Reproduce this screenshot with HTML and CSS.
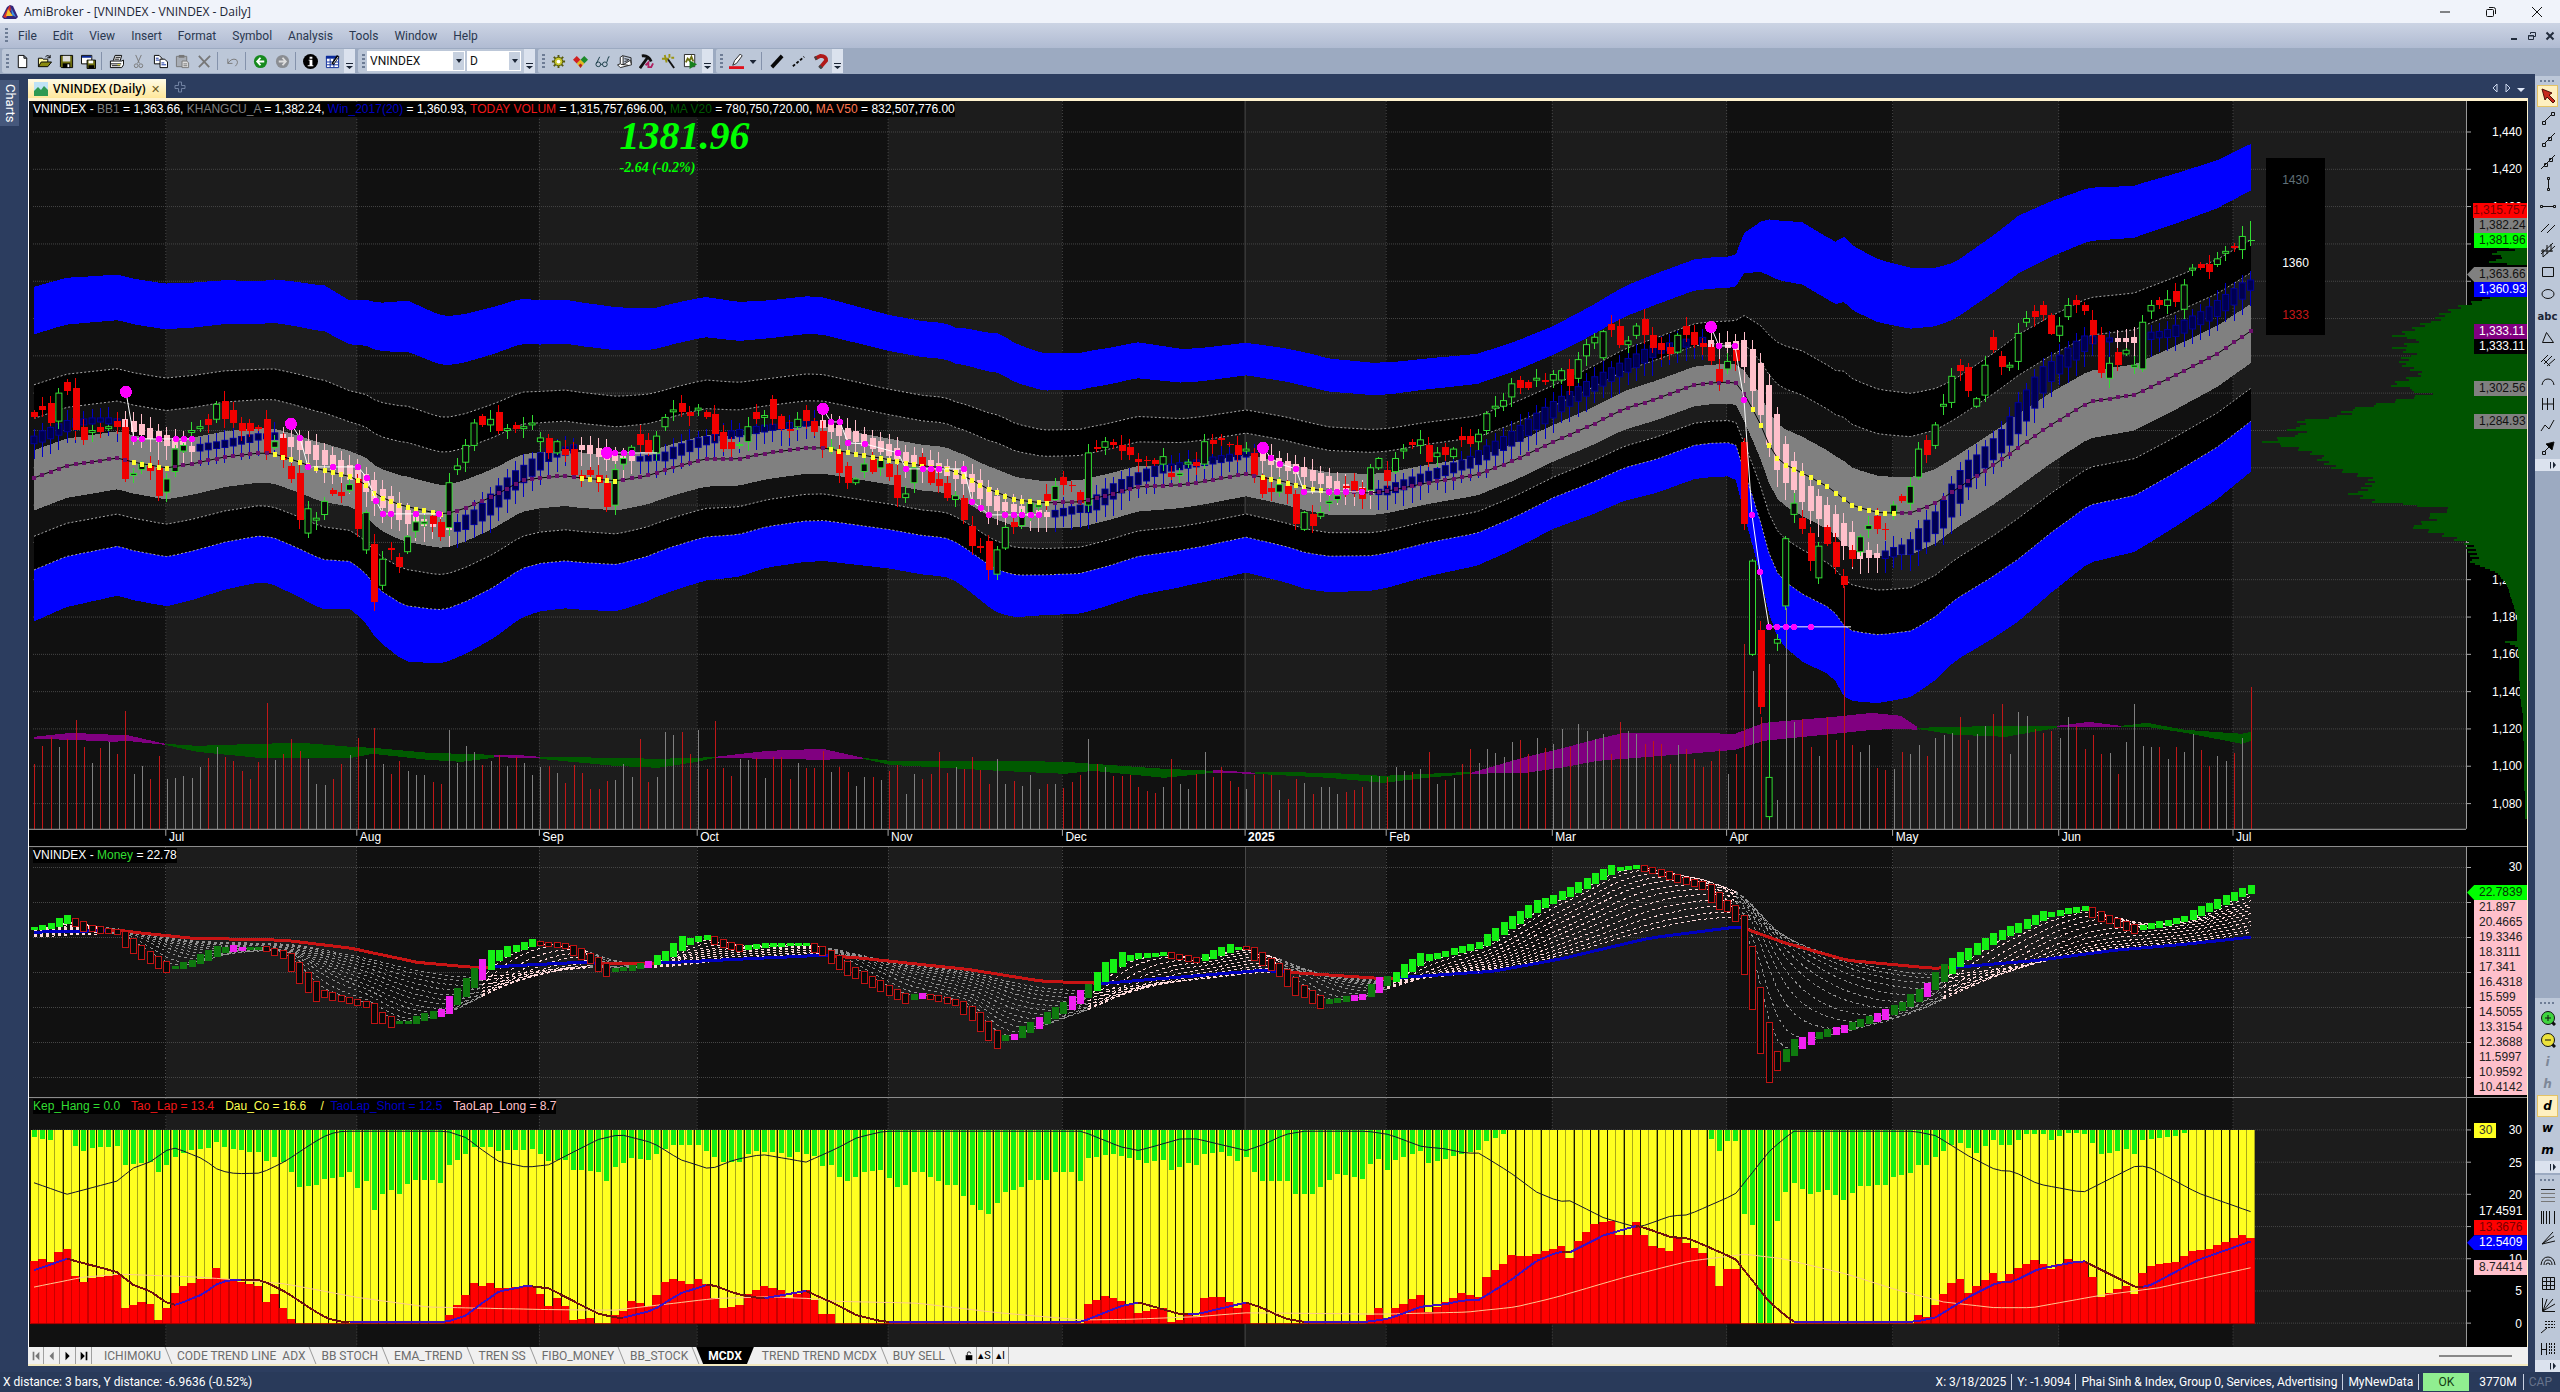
FILE: index.html
```
<!DOCTYPE html>
<html lang="en">
<head>
  <meta charset="UTF-8">
  <meta name="viewport" content="width=device-width, initial-scale=1.0">
  <title>AmiBroker - [VNINDEX - VNINDEX - Daily]</title>
  <link rel="stylesheet" href="styles.css">
</head>
<body>
  <header class="titlebar">
    <svg class="logo" viewBox="0 0 16 16"><path d="M8 1l3 1 5 11-2 2H2l-2-2L5 3z" fill="#33267c"/><path d="M8 1L1 13l3 1 5-8z" fill="#d8322c"/><path d="M6 5l5 7H4z" fill="#f4c22c"/><path d="M9 4l5 9-4-2z" fill="#3d8ee0"/></svg>
    <h1>AmiBroker - [VNINDEX - VNINDEX - Daily]</h1>
    <div class="wincontrols">
      <button aria-label="Minimize"><svg viewBox="0 0 12 12"><path d="M1 6h10"/></svg></button>
      <button aria-label="Restore"><svg viewBox="0 0 12 12"><rect x="1.5" y="3.5" width="7" height="7" rx="1"/><path d="M4 1.500h4.500q2 0 2 2V8"/></svg></button>
      <button aria-label="Close"><svg viewBox="0 0 12 12"><path d="M1 1l10 10M11 1L1 11"/></svg></button>
    </div>
  </header>

  <nav class="menubar">
    <span class="grip"></span>
    <button>File</button><button>Edit</button><button>View</button><button>Insert</button><button>Format</button><button>Symbol</button><button>Analysis</button><button>Tools</button><button>Window</button><button>Help</button>
    <div class="mdi">
      <button aria-label="Minimize chart"><svg viewBox="0 0 10 10"><path d="M2 8h6" stroke-width="2"/></svg></button>
      <button aria-label="Restore chart"><svg viewBox="0 0 10 10"><path d="M3.500 3V1.500h5v4H7M1.500 4.500h5v4h-5zM1 5h6" /></svg></button>
      <button aria-label="Close chart"><svg viewBox="0 0 10 10"><path d="M1.500 1.500l7 7M8.500 1.500l-7 7" stroke-width="2"/></svg></button>
    </div>
  </nav>

  <div class="toolbars">
    <div class="toolbar">
      <span class="grip"></span>
      <button aria-label="New"><svg viewBox="0 0 16 16"><path d="M3.500 1.500h6l3 3v10h-9zM9.500 1.500v3h3" fill="#fff" stroke="#000"/></svg></button>
      <button aria-label="Open"><svg viewBox="0 0 16 16"><path d="M1.500 13.500v-9h4l1 1h5v3" fill="#fff8a0" stroke="#000"/><path d="M1.500 13.500l3-5h11l-4 5z" fill="#8a8a10" stroke="#000"/><path d="M9 3q3-3 5 1M14 1v3h-3" fill="none" stroke="#000"/></svg></button>
      <button aria-label="Save"><svg viewBox="0 0 16 16"><path d="M1.500 1.500h13v13h-12l-1-1z" fill="#6d6d10" stroke="#000"/><path d="M4 2h8v6H4z" fill="#ddd"/><path d="M4 10h8v5H4z" fill="#000"/><path d="M9 11h2v3H9z" fill="#fff"/></svg></button>
      <button aria-label="Save as"><svg viewBox="0 0 16 16"><path d="M.5 1.500h11v9H.5z" fill="#fff" stroke="#000"/><path d="M1 2h10v2H1z" fill="#0a2a9a"/><path d="M6.500 6.500h9v9h-9z" fill="#6d6d10" stroke="#000"/><path d="M8 7h5v3H8z" fill="#fff"/><path d="M8 12h6v3H8z" fill="#000"/></svg></button>
      <i class="sep"></i>
      <button aria-label="Print"><svg viewBox="0 0 16 16"><path d="M4.500 7l2-5.500h7L12 7M1.500 7.500h12l2-1v5l-2 3h-12z" fill="#fff" stroke="#000"/><path d="M7 3.500h5M6 5.500h5M2 10.500h11M3 12.500h9" stroke="#000"/><path d="M9 11h3v1H9z" fill="#e8e020"/></svg></button>
      <button aria-label="Cut"><svg viewBox="0 0 16 16"><path d="M5 1l4 9M11 1L7 10" fill="none" stroke="#777"/><circle cx="5.500" cy="12.500" r="2" fill="none" stroke="#777"/><circle cx="10.500" cy="12.500" r="2" fill="none" stroke="#777"/></svg></button>
      <button aria-label="Copy"><svg viewBox="0 0 16 16"><path d="M1.500 1.500h5l3 3v6h-8z" fill="#fff" stroke="#000"/><path d="M7.500 5.500h5l3 3v6h-8z" fill="#fff" stroke="#000"/><path d="M3 4.500h3M3 6.500h4M9 9.500h3M9 11.500h5" stroke="#0a2a9a"/></svg></button>
      <button aria-label="Paste"><svg viewBox="0 0 16 16"><path d="M1.500 2.500h11v11h-11z" fill="#a8adb5" stroke="#777"/><path d="M4 1h6v3H4z" fill="#777"/><path d="M7.500 7.500h5l2 2v5h-7z" fill="#ddd" stroke="#777"/><path d="M9 10.500h4M9 12.500h4" stroke="#777"/></svg></button>
      <button aria-label="Delete"><svg viewBox="0 0 16 16"><path d="M2 2l11 12M14 2L2 14" fill="none" stroke="#777" stroke-width="2"/></svg></button>
      <i class="sep"></i>
      <button aria-label="Undo"><svg viewBox="0 0 16 16"><path d="M3 5v5h5M3 10q4-6 9-4 3 3-1 7" fill="none" stroke="#777"/></svg></button>
      <i class="sep"></i>
      <button aria-label="Back"><svg viewBox="0 0 16 16"><circle cx="8" cy="8" r="7" fill="#168a1e"/><path d="M12 8H5M8 4L4.500 8 8 12" fill="none" stroke="#fff" stroke-width="2"/></svg></button>
      <button aria-label="Forward"><svg viewBox="0 0 16 16"><circle cx="8" cy="8" r="7" fill="#8a8d92"/><path d="M4 8h7M8 4l3.500 4L8 12" fill="none" stroke="#ddd" stroke-width="2"/></svg></button>
      <i class="sep"></i>
      <button aria-label="Info"><svg viewBox="0 0 16 16"><circle cx="8" cy="8" r="8" fill="#000"/><path d="M7 3h3v2H7zM6 6h4v6h1v1H5v-1h2V7H6z" fill="#fff"/></svg></button>
      <button aria-label="Properties"><svg viewBox="0 0 16 16"><path d="M1.500 2.500h13v12h-13z" fill="#fff" stroke="#0a2a9a"/><path d="M1 2h14v3H1z" fill="#0a2a9a"/><path d="M2 8.500h12M2 11.500h12M5.500 5v9M9.500 5v9" stroke="#0a2a9a"/><path d="M14 2l-6 9" stroke="#000" stroke-width="3"/><path d="M14 3l-5 7" stroke="#ddd"/></svg></button>
      <button class="more" aria-label="Toolbar options"></button>
    </div>
    <div class="toolbar">
      <span class="grip"></span>
      <select class="symbol" aria-label="Symbol"><option>VNINDEX</option></select>
      <select class="interval" aria-label="Interval"><option>D</option></select>
      <button class="more" aria-label="Toolbar options"></button>
    </div>
    <div class="toolbar">
      <span class="grip"></span>
      <button aria-label="Settings"><svg viewBox="0 0 16 16"><path d="M8 1v14M1 8h14M3 3l10 10M13 3L3 13" stroke="#55580c" stroke-width="2"/><circle cx="8" cy="8" r="4.500" fill="#c8c82c" stroke="#55580c"/><circle cx="8" cy="8" r="2" fill="#fff"/></svg></button>
      <button aria-label="Explore"><svg viewBox="0 0 16 16"><path d="M4 2l4 4-4 4-4-4z" fill="#d02020"/><path d="M12 2l4 4-4 4-4-4z" fill="#1d8a2a"/><path d="M8 6l4 4-4 5-4-5z" fill="#e0b820"/><path d="M8 10l2 2-2 3-2-3z" fill="#b02020"/></svg></button>
      <button aria-label="Analysis"><svg viewBox="0 0 16 16"><circle cx="3.500" cy="11" r="2.500" fill="none" stroke="#163a44"/><circle cx="10.500" cy="11" r="2.500" fill="none" stroke="#163a44"/><path d="M6 11h2M1.500 10L5 3M12.500 9l2-6h1" fill="none" stroke="#163a44"/></svg></button>
      <button aria-label="Report"><svg viewBox="0 0 16 16"><path d="M3.500 3.500l3-2v10l8-5 1 5-12 3-3-3 3-1z" fill="#fff" stroke="#222"/><path d="M7 2l8 2v6M8 5l5 1M8 8l4-1M4 11l8 1" fill="none" stroke="#222"/></svg></button>
      <button aria-label="Automation"><svg viewBox="0 0 16 16"><path d="M3 2q7-1 10 6M9 4L1 15" fill="none" stroke="#111" stroke-width="3"/><path d="M7 12l3-3v5h3l2-4" fill="none" stroke="#b02060" stroke-width="2"/></svg></button>
      <button aria-label="Wizard"><svg viewBox="0 0 16 16"><path d="M7 5l7 10" stroke="#111" stroke-width="2"/><path d="M1 5h7M4 1l2 8M9 0v4M11 4h3" stroke="#9a9410" stroke-width="2"/></svg></button>
      <button aria-label="Run"><svg viewBox="0 0 16 16"><path d="M1.500.5h11v13h-11z" fill="#fff" stroke="#222"/><path d="M3 9l2-4 2 2 2-4 2 5" fill="none" stroke="#6d7010" stroke-width="2"/><path d="M7 7l8 4-8 5z" fill="#15801c"/></svg></button>
      <button class="more" aria-label="Toolbar options"></button>
    </div>
    <div class="toolbar">
      <span class="grip"></span>
      <button aria-label="Line colour"><svg viewBox="0 0 16 16"><path d="M0 13h16v3H0z" fill="#e0101c"/><path d="M12 0l2 2-6 8-4 2 2-5z" fill="#fff" stroke="#222"/></svg></button>
      <button class="caret" aria-label="Pick colour"></button>
      <i class="sep"></i>
      <button aria-label="Thick line"><svg viewBox="0 0 16 16"><path d="M3 14L14 2" stroke="#080808" stroke-width="4"/></svg></button>
      <button aria-label="Dotted line"><svg viewBox="0 0 16 16"><path d="M2 13L14 3" stroke="#080808" stroke-width="2" stroke-dasharray="3 2"/></svg></button>
      <button aria-label="Snap to price"><svg viewBox="0 0 16 16"><path d="M2 5l6-3q6 0 6 5l-6 7" fill="none" stroke="#b01818" stroke-width="4"/><path d="M2 5l2-1M7 15l2-2" stroke="#444" stroke-width="4"/></svg></button>
      <button class="more" aria-label="Toolbar options"></button>
    </div>
  </div>

  <main class="workspace">
    <aside class="sidebar"><button>Charts</button></aside>
    <section class="document">
      <div class="doctabs">
        <button class="doctab"><svg viewBox="0 0 14 14"><path d="M0 0h14v14H0z" fill="#bfe3f5"/><path d="M0 9l4-4 3 3 3-4 4 4v6H0z" fill="#2f9a52"/></svg><b>VNINDEX (Daily)</b><span>✕</span></button>
        <button class="addtab" aria-label="New chart"><svg viewBox="0 0 12 12"><path d="M4.500 1h3v3.500H11v3H7.500V11h-3V7.500H1v-3h3.500z" fill="none" stroke="#7182a2"/></svg></button>
        <div class="tabnav">
          <button aria-label="Previous"><svg viewBox="0 0 8 10"><path d="M6 1L2 5l4 4z" fill="none" stroke="#ccd8ee"/></svg></button>
          <button aria-label="Next"><svg viewBox="0 0 8 10"><path d="M2 1l4 4-4 4z" fill="none" stroke="#ccd8ee"/></svg></button>
          <button aria-label="List"><svg viewBox="0 0 8 10"><path d="M0 5h8L4 9z" fill="#dfe8f8"/></svg></button>
        </div>
      </div>
      <div class="charts">
        <div class="panel price" id="price">
          <svg class="plot" viewBox="29 101 2498 745" preserveAspectRatio="none"></svg>
          <div class="scale"></div>
          <svg class="profile" viewBox="29 101 2498 745" preserveAspectRatio="none"></svg>
          <div class="tags"></div>
          <p class="legend">VNINDEX - <span class="gray">BB1</span> = 1,363.66, <span class="gray">KHANGCU_A</span> = 1,382.24, <span class="blue">Win_2017(20)</span> = 1,360.93, <span class="red">TODAY VOLUM</span> = 1,315,757,696.00, <span class="green">MA V20</span> = 780,750,720.00, <span class="coral">MA V50</span> = 832,507,776.00</p>
          <div class="quote"><strong>1381.96</strong><em>-2.64 (-0.2%)</em></div>
          <div class="levels"><span class="slate">1430</span><span>1360</span><span class="darkred">1333</span></div>
          <div class="months"></div>
        </div>
        <div class="panel money" id="money">
          <svg class="plot" viewBox="29 847 2498 250" preserveAspectRatio="none"></svg>
          <div class="scale"></div>
          <div class="tags"></div>
          <p class="legend">VNINDEX - <span class="lime">Money</span> = 22.78</p>
        </div>
        <div class="panel mcdx" id="mcdx">
          <svg class="plot" viewBox="29 1098 2498 249" preserveAspectRatio="none"></svg>
          <div class="scale"></div>
          <div class="tags"></div>
          <p class="legend wide"><span class="lime">Kep_Hang = 0.0</span><span class="red">Tao_Lap = 13.4</span><span class="yellow">Dau_Co = 16.6</span><span class="yellow">&nbsp;/ &nbsp;<span class="blue">TaoLap_Short = 12.5</span></span><span class="pink">TaoLap_Long = 8.7</span></p>
        </div>
      </div>
      <div class="sheets">
        <div class="sheetnav">
          <button class="off" aria-label="First sheet"><svg viewBox="0 0 12 12"><path d="M2 1h2v10H2zM10 1v10L5 6z"/></svg></button>
          <button class="off" aria-label="Previous sheet"><svg viewBox="0 0 12 12"><path d="M8 1v10L3 6z"/></svg></button>
          <button aria-label="Next sheet"><svg viewBox="0 0 12 12"><path d="M3 1v10l5-5z"/></svg></button>
          <button aria-label="Last sheet"><svg viewBox="0 0 12 12"><path d="M8 1h2v10H8zM2 1v10l5-5z"/></svg></button>
        </div>
        <button class="sheet">ICHIMOKU</button><button class="sheet">CODE TREND LINE&nbsp; ADX</button><button class="sheet">BB STOCH</button><button class="sheet">EMA_TREND</button><button class="sheet">TREN SS</button><button class="sheet">FIBO_MONEY</button><button class="sheet">BB_STOCK</button><button class="sheet active">MCDX</button><button class="sheet">TREND TREND MCDX</button><button class="sheet">BUY SELL</button>
        <div class="sheetlocks">
          <button aria-label="Lock"><svg viewBox="0 0 12 12"><path d="M2 5h8v6H2z"/><path d="M4 5V3q0-2 2-2t2 2" fill="none" stroke="#000"/></svg></button>
          <button>▴S</button><button>▴I</button>
        </div>
        <span class="thumb"></span>
      </div>
    </section>
    <aside class="drawbars">
      <div class="vbar">
        <span class="dots"></span>
        <button class="on" aria-label="Select"><svg viewBox="0 0 16 16"><path d="M2 1l10 4-3 2 6 6-2 2-6-6-2 3z" fill="#c8281c" stroke="#501008"/></svg></button>
        <button aria-label="Trend line"><svg viewBox="0 0 16 16"><path d="M4 12l8-8M2.500 11.500h3v3h-3zM11.500 2.500h3v3h-3z"/></svg></button>
        <button aria-label="Ray"><svg viewBox="0 0 16 16"><path d="M4 12L15 1M2.500 11.500h3v3h-3zM8.500 5.500h3v3h-3z"/></svg></button>
        <button aria-label="Extended line"><svg viewBox="0 0 16 16"><path d="M1 15L15 1M4.500 9.500h3v3h-3zM9.500 4.500h3v3h-3z"/></svg></button>
        <button aria-label="Vertical line"><svg viewBox="0 0 16 16"><path d="M8.500 3v10M7.500 1.500h2v2h-2zM7.500 12.500h2v2h-2z"/></svg></button>
        <button aria-label="Horizontal line"><svg viewBox="0 0 16 16"><path d="M3 8.500h10M.5 7.500h2v2h-2zM13.500 7.500h2v2h-2z"/></svg></button>
        <button aria-label="Parallel lines"><svg viewBox="0 0 16 16"><path d="M1 12l8-8M7 13l8-8"/></svg></button>
        <button aria-label="Channel"><svg viewBox="0 0 16 16"><path d="M1 12L13 1M3 15L15 4M3 7v8M7 3v9M11 2v8M1 9l12 0"/></svg></button>
        <button aria-label="Rectangle"><svg viewBox="0 0 16 16"><path d="M2.500 3.500h11v9h-11z"/></svg></button>
        <button aria-label="Ellipse"><svg viewBox="0 0 16 16"><ellipse cx="8" cy="8" rx="6" ry="4.500"/></svg></button>
        <button class="abc">abc</button>
        <button aria-label="Triangle"><svg viewBox="0 0 16 16"><path d="M6.500 2.500l7 10h-11z"/></svg></button>
        <button aria-label="Pitchfork"><svg viewBox="0 0 16 16"><path d="M1 10l7-7M4 12l8-8M7 14l8-7M3 7l7 7"/></svg></button>
        <button aria-label="Arc"><svg viewBox="0 0 16 16"><path d="M2 11q1-6 6-6t6 6"/></svg></button>
        <button aria-label="Cycle"><svg viewBox="0 0 16 16"><path d="M2.500 2v12M7.500 2v12M13.500 2v12M3 8h10"/></svg></button>
        <button aria-label="Zig zag"><svg viewBox="0 0 16 16"><path d="M1 13l4-6 4 4 5-9"/></svg></button>
        <button aria-label="Arrow"><svg viewBox="0 0 16 16"><path d="M5 11l5-5M2.500 11.500h3v3h-3z"/><path d="M14 2l-2 8-6-6z" fill="#000"/></svg></button>
        <button class="vmore" aria-label="Toolbar options"></button>
      </div>
      <div class="vspace"></div>
      <div class="vbar">
        <span class="dots"></span>
        <button aria-label="Zoom in"><svg viewBox="0 0 16 16"><path d="M12 12l3 3" stroke-width="3"/><circle cx="8" cy="8" r="6.500" fill="#3fd43f"/><path d="M5 8h6M8 5v6"/></svg></button>
        <button aria-label="Zoom out"><svg viewBox="0 0 16 16"><path d="M12 12l3 3" stroke-width="3"/><circle cx="8" cy="8" r="6.500" fill="#ece23c"/><path d="M5 8h6"/></svg></button>
        <button class="letter dim">i</button>
        <button class="letter dim">h</button>
        <button class="letter on">d</button>
        <button class="letter">w</button>
        <button class="letter">m</button>
        <button class="vmore" aria-label="Toolbar options"></button>
      </div>
      <div class="vbar">
        <span class="dots"></span>
        <button aria-label="Retracement"><svg viewBox="0 0 16 16"><path d="M1 2.500h14"/><path d="M1 6.500h14M1 10.500h14M1 14.500h14" stroke="#777"/></svg></button>
        <button aria-label="Time zones"><svg viewBox="0 0 16 16"><path d="M1.500 2v13M3.500 2v13M6.500 2v13M9.500 2v13M14.500 2v13"/></svg></button>
        <button aria-label="Fan"><svg viewBox="0 0 16 16"><path d="M2 13L13 1M2 13l12-8M2 13l13-3"/></svg></button>
        <button aria-label="Fibonacci arcs"><svg viewBox="0 0 16 16"><path d="M1 12q1-8 7-8t7 8M4 12q0-5 4-5t4 5M6 12q0-2 2-2t2 2"/></svg></button>
        <button aria-label="Gann square"><svg viewBox="0 0 16 16"><path d="M2.500 2.500h12v12h-12zM2 6.500h12M2 10.500h12M6.500 2v12M10.500 2v12"/></svg></button>
        <button aria-label="Gann fan"><svg viewBox="0 0 16 16"><path d="M2.500 1v13.500H15M3 14L13 2M3 14L7 2M3 14l12-7"/></svg></button>
        <button aria-label="Extension"><svg viewBox="0 0 16 16"><path d="M5 2.500h10M5 5.500h10M5 8.500h10" stroke-dasharray="2 1"/><path d="M1 14l6-5"/></svg></button>
        <button aria-label="Time extension"><svg viewBox="0 0 16 16"><path d="M1.500 2v12M6.500 2v12M2 8.500h4"/><path d="M9.500 2v12M11.500 2v12M14.500 2v12" stroke-dasharray="2 1"/></svg></button>
        <button class="vmore" aria-label="Toolbar options"></button>
      </div>
    </aside>
  </main>

  <footer class="status">
    <span class="grow">X distance: 3 bars, Y distance: -6.9636 (-0.52%)</span>
    <span>X: 3/18/2025</span><span>Y: -1.9094</span><span>Phai Sinh &amp; Index, Group 0, Services, Advertising</span><span>MyNewData</span><span class="ok">OK</span><span>3770M</span><span class="cap">CAP</span>
  </footer>
  <script src="chart.js"></script>
</body>
</html>
```
FILE: styles.css
```
* {
  box-sizing: border-box;
}
body {
  margin: 0;
  height: 100vh;
  display: flex;
  flex-direction: column;
  background: #2c3d5f;
  color: #1b2535;
  font-family: Roboto, "Open Sans", sans-serif;
  font-size: 12px;
  line-height: 16px;
  overflow: hidden;
}
button {
  margin: 0;
  padding: 0;
  border: 0;
  background: none;
  color: inherit;
  font: inherit;
  white-space: nowrap;
}
svg {
  display: block;
}

/* title and menu */
.titlebar {
  display: flex;
  align-items: center;
  height: 23px;
  padding-left: 2px;
  background: #f0f3fa;
}
.logo {
  width: 16px;
  height: 16px;
  margin-right: 6px;
}
h1 {
  flex: 1;
  margin: 0;
  font-family: "Open Sans", sans-serif;
  font-size: 12px;
  font-weight: 400;
}
.wincontrols {
  display: flex;
}
.wincontrols button {
  width: 46px;
  display: flex;
  justify-content: center;
}
.wincontrols svg {
  width: 12px;
  height: 12px;
  fill: none;
  stroke: #111;
}
.menubar {
  display: flex;
  align-items: center;
  gap: 16px;
  height: 25px;
  padding-left: 5px;
  background: linear-gradient(#ccd4e4, #b0bbd2);
  color: #2a3850;
}
.menubar .grip {
  margin-right: -6px;
}
.grip {
  width: 3px;
  height: 15px;
  background: repeating-linear-gradient(#6d7c95 0 2px, transparent 2px 4px);
  flex: none;
}
.mdi {
  display: flex;
  gap: 8px;
  margin-left: auto;
  padding-right: 5px;
}
.mdi svg {
  width: 10px;
  height: 10px;
  fill: none;
  stroke: #222c3c;
}

/* toolbars */
.toolbars {
  display: flex;
  gap: 3px;
  height: 26px;
  padding: 1px 2px;
  background: #9caac1;
}
.toolbar {
  display: flex;
  align-items: center;
  padding-left: 4px;
  border-radius: 2px;
  background: #bcc7d8;
}
.toolbar .grip {
  margin-right: 2px;
}
.toolbar button {
  width: 22px;
  display: flex;
  justify-content: center;
}
.toolbar svg {
  width: 15px;
  height: 15px;
}
.sep {
  width: 1px;
  height: 18px;
  margin: 0 3px 0 2px;
  background: #8492ab;
}
.toolbar .more {
  width: 11px;
  height: 24px;
  margin-left: 1px;
  align-items: flex-end;
  padding-bottom: 4px;
  background: #dbe2ee;
}
.more::after,
.caret::after {
  content: "";
  width: 7px;
  height: 6px;
  background: #1b2535;
  clip-path: polygon(0 0, 100% 0, 100% 1px, 0 1px, 0 3px, 100% 3px, 50% 100%, 0 3px);
}
.toolbar .caret {
  width: 12px;
}
.toolbar .caret::after {
  clip-path: polygon(0 2px, 100% 2px, 50% 100%);
}
.toolbar select {
  height: 20px;
  margin-right: 2px;
  padding: 0 3px;
  border: 0;
  appearance: none;
  border-radius: 0;
  font: inherit;
  color: #111;
  background: url("data:image/svg+xml,%3Csvg xmlns='http://www.w3.org/2000/svg' width='12' height='20'%3E%3Cpath fill='%23c6d0df' d='M0 1h11v18H0z'/%3E%3Cpath fill='%231b2535' d='M3 8h6l-3 4z'/%3E%3C/svg%3E") no-repeat right center #fff;
}
.symbol {
  width: 98px;
}
.interval {
  width: 54px;
}

/* workspace */
.workspace {
  flex: 1;
  min-height: 0;
  display: flex;
}
.sidebar {
  width: 28px;
  padding-top: 6px;
}
.sidebar button {
  width: 19px;
  height: 46px;
  color: #fff;
  background: #46587c;
  font-size: 13px;
  writing-mode: vertical-rl;
}
.document {
  flex: 1;
  min-width: 0;
  display: flex;
  flex-direction: column;
  margin-bottom: 6px;
}
.doctabs {
  display: flex;
  align-items: flex-end;
  height: 24px;
  flex: none;
}
.doctab {
  display: flex;
  align-items: center;
  gap: 5px;
  height: 19px;
  padding: 0 6px;
  background: linear-gradient(#fffbe6, #ffe79a);
  color: #000;
  font-family: "Open Sans", sans-serif;
}
.doctab svg {
  width: 14px;
  height: 14px;
}
.doctab b {
  font-weight: 600;
}
.doctab span {
  color: #6b5a20;
  font-size: 11px;
}
.addtab {
  padding: 0 0 5px 8px;
}
.addtab svg {
  width: 12px;
  height: 12px;
}
.tabnav {
  display: flex;
  gap: 5px;
  margin-left: auto;
  padding: 0 3px 5px 0;
}
.tabnav svg {
  width: 8px;
  height: 10px;
}
.charts {
  flex: 1;
  min-height: 0;
  display: flex;
  flex-direction: column;
  background: #000;
  border-top: 3px solid #fff3cf;
  border-left: 1px solid #fff;
  border-right: 1px solid #fff3cf;
  color: #fff;
  font-family: "Liberation Sans", Arial, sans-serif;
}
.panel {
  position: relative;
  border-bottom: 1px solid #8c8c8c;
}
.price {
  flex: 746;
}
.money {
  flex: 251;
}
.mcdx {
  flex: 249;
  border-bottom: 0;
}
.plot,
.profile {
  position: absolute;
  left: 0;
  top: 0;
  width: 100%;
  height: 100%;
  shape-rendering: crispEdges;
}
.legend {
  position: absolute;
  left: 4px;
  top: 1px;
  margin: 0;
  background: #000;
  line-height: 15px;
  white-space: nowrap;
}
.legend.wide {
  display: flex;
  gap: 11px;
}
.gray { color: #808080; }
.blue { color: #0000c0; }
.red { color: #f01818; }
.green { color: #005800; }
.lime { color: #32dc32; }
.coral { color: #ff7850; }
.yellow { color: #ffff50; }
.pink { color: #ffc0cb; }
.slate { color: #607078; }
.darkred { color: #c81818; }
.quote {
  position: absolute;
  left: 24%;
  top: 12px;
  margin-left: -9px;
  display: flex;
  flex-direction: column;
  color: #0f0;
  font-family: "Liberation Serif", "Times New Roman", serif;
  font-style: italic;
  font-weight: 700;
}
.quote strong {
  font-size: 40px;
  line-height: 46px;
}
.quote em {
  font-size: 14px;
  line-height: 18px;
}
.levels {
  position: absolute;
  right: 202px;
  top: 57px;
  width: 59px;
  height: 177px;
  padding: 14px 0 12px;
  display: flex;
  flex-direction: column;
  align-items: center;
  background: #000;
}
.levels span + span {
  margin-top: 67px;
}
.levels span + .darkred {
  margin-top: 36px;
}
.months span {
  position: absolute;
  bottom: 1px;
  padding-left: 3px;
  line-height: 16px;
}
.months .year {
  font-weight: 700;
}
.scale span {
  position: absolute;
  right: 5px;
  margin-top: -8px;
}
.tag {
  position: absolute;
  right: 0;
  width: 53px;
  height: 15px;
  padding-left: 5px;
  line-height: 15px;
  overflow: hidden;
}
.tag.small {
  width: 22px;
  right: 31px;
}
.tag.tight {
  width: 54px;
  padding-left: 0;
}
.tag.arrow {
  width: 60px;
  padding-left: 12px;
  clip-path: polygon(0 50%, 12% 0, 100% 0, 100% 100%, 12% 100%);
}

/* sheet tabs */
.sheets {
  display: flex;
  align-items: center;
  height: 19px;
  flex: none;
  background: #f0f0f0;
  border-bottom: 2px solid #f3e9bf;
  color: #6c6c6c;
}
.sheetnav,
.sheetlocks {
  display: flex;
  align-items: center;
  color: #000;
}
.sheetnav button,
.sheetlocks button {
  width: 16px;
  height: 17px;
  border-right: 1px solid #a0a0a0;
  display: flex;
  align-items: center;
  justify-content: center;
  font-size: 11px;
}
.sheetlocks {
  padding-left: 8px;
}
.sheets svg {
  width: 10px;
  height: 10px;
}
.off svg {
  fill: #777;
}
.sheet {
  position: relative;
  height: 17px;
  line-height: 16px;
  padding: 0 8px;
}
.sheet:not(.active)::after {
  content: "";
  position: absolute;
  right: 0;
  top: 0;
  width: 1px;
  height: 17px;
  background: #999;
  transform: skewX(22deg);
}
.sheetnav + .sheet {
  margin-left: 4px;
}
.sheet.active {
  padding: 0 12px;
  background: #000;
  color: #fff;
  font-weight: 700;
  clip-path: polygon(0 0, 100% 0, 88% 100%, 12% 100%);
}
.thumb {
  width: 73px;
  height: 2px;
  margin: 0 16px 0 auto;
  background: #888;
}

/* drawing toolbars */
.drawbars {
  width: 32px;
  padding-left: 7px;
  display: flex;
  flex-direction: column;
}
.vspace {
  flex: 1;
  background: #9caac1;
}
.vbar {
  background: #bcc7d8;
  display: flex;
  flex-direction: column;
  align-items: center;
  border-top: 2px solid #9caac1;
}
.dots {
  width: 15px;
  height: 2px;
  margin: 4px 0 3px;
  background: repeating-linear-gradient(90deg, #6d7c95 0 2px, transparent 2px 4px);
}
.vbar button {
  width: 21px;
  height: 22px;
  display: flex;
  align-items: center;
  justify-content: center;
}
.vbar svg {
  width: 16px;
  height: 16px;
  fill: none;
  stroke: #111;
}
.vbar .on {
  background: #fff0c0;
  border: 1px solid #e5c365;
}
.vbar .abc {
  font: bold 10px "DejaVu Sans", sans-serif;
}
.vbar .letter {
  font: italic bold 12px "DejaVu Sans", sans-serif;
  color: #000;
}
.vbar .dim {
  color: #7d8798;
}
.vbar .vmore {
  width: 100%;
  height: 12px;
  justify-content: flex-end;
  padding-right: 4px;
  background: #dbe2ee;
}
.vmore::after {
  content: "";
  width: 6px;
  height: 7px;
  background: #1b2535;
  clip-path: polygon(0 0, 1px 0, 1px 100%, 3px 100%, 100% 50%, 3px 0, 3px 100%, 0 100%);
}

/* status bar */
.status {
  display: flex;
  align-items: center;
  height: 20px;
  padding: 0 3px;
  color: #fff;
  background: #293a5a;
}
.status span {
  padding: 0 5px;
  border-right: 1px solid #c8d0e0;
  white-space: nowrap;
}
.status .grow {
  flex: 1;
  padding-left: 0;
  border: 0;
}
.status .ok {
  width: 46px;
  margin-left: 4px;
  border: 0;
  text-align: center;
  color: #123a12;
  background: #90ee90;
  line-height: 18px;
}
.status .ok + span {
  padding: 0 6px 0 10px;
}
.status .cap {
  border: 0;
  color: #66738c;
}
```
FILE: chart.js
```
const BARS = 268, X0 = 34, STEP = 8.302;
const bx = i => X0 + i * STEP;
const py = p => 132 + (1440 - p) * 1.866;
const vy = v => 1323.5 - v * 6.45;

// flat [x, y, x, y, ...] list, linear between the points
function at(pts, x) {
  if (x <= pts[0]) return pts[1];
  for (let i = 2; i < pts.length; i += 2) {
    if (x <= pts[i]) {
      const t = (x - pts[i - 2]) / (pts[i] - pts[i - 2] || 1);
      return pts[i - 1] + (pts[i + 1] - pts[i - 1]) * t;
    }
  }
  return pts[pts.length - 1];
}
const inside = (ranges, x) => ranges.some(r => x >= r[0] && x <= r[1]);
const rect = (x, y, w, h, fill, extra = "") => `<rect x="${x.toFixed(1)}" y="${y.toFixed(1)}" width="${w}" height="${Math.max(h, 1).toFixed(1)}" fill="${fill}" ${extra}/>`;
const line = (x1, y1, x2, y2, c, extra = "") => `<path d="M${x1.toFixed(1)} ${y1.toFixed(1)}L${x2.toFixed(1)} ${y2.toFixed(1)}" stroke="${c}" fill="none" ${extra}/>`;
const poly = (pts, c, extra = "") => `<polyline points="${pts.map(p => p[0].toFixed(1) + "," + p[1].toFixed(1)).join(" ")}" fill="none" stroke="${c}" ${extra}/>`;

const months = [[16, "Jul"], [39, "Aug"], [61, "Sep"], [80, "Oct"], [103, "Nov"], [124, "Dec"], [146, "2025"], [163, "Feb"], [183, "Mar"], [204, "Apr"], [224, "May"], [244, "Jun"], [265, "Jul"]];

function backdrop(top, bottom, grid) {
  let s = rect(29, top, 2438, bottom - top, "#111");
  months.forEach((m, i) => {
    const x = bx(m[0]) - 1, end = i + 1 < months.length ? bx(months[i + 1][0]) - 1 : 2466;
    s += rect(x, top, (end - x).toFixed(1), bottom - top, i % 2 ? "#111" : "#1c1c1c");
    s += line(x, top, x, bottom, "#484848", m[1] === "2025" ? "" : 'stroke-dasharray="1 2"');
  });
  grid.forEach(y => {
    s += line(33, y, 2466, y, "#464646", 'stroke-dasharray="1 1"') + line(2466, y, 2471, y, "#aaa");
  });
  return s + line(2466.5, top, 2466.5, bottom, "#999");
}

/* ---- price ---- */
const mid = [34,478, 66,466, 118,458, 132,462, 166,468, 192,464, 225,457, 261,453, 274,454, 296,461, 318,469, 351,477, 365,484, 378,496, 400,505, 439,514, 450,513, 466,508, 494,496, 521,481, 540,478, 565,476, 581,478, 617,481, 647,476, 675,467, 705,459, 738,459, 768,453, 806,448, 823,448, 840,451, 890,460, 923,466, 945,468, 966,477, 988,489, 1016,500, 1043,503, 1079,502, 1109,495, 1137,487, 1180,485, 1202,482, 1246,474, 1285,482, 1307,488, 1329,492, 1372,493, 1389,491, 1427,483, 1477,475, 1515,460, 1553,442, 1592,425, 1624,409, 1656,399, 1694,385, 1710,383, 1735,382, 1745,395, 1760,423, 1770,447, 1780,462, 1802,473, 1828,487, 1853,506, 1879,513, 1911,513, 1936,503, 1955,490, 1994,465, 2019,447, 2051,425, 2089,402, 2134,395, 2172,377, 2217,354, 2251,331];
const spread = [34,.99, 118,.95, 170,.955, 261,.89, 324,.96, 351,.91, 378,1, 406,1.07, 450,1.02, 494,.98, 540,.92, 617,.9, 658,.855, 705,.84, 768,.79, 812,.785, 890,.75, 955,.75, 999,.83, 1043,.775, 1090,.77, 1137,.75, 1186,.7, 1246,.68, 1307,.7, 1372,.675, 1427,.645, 1482,.625, 1553,.6, 1656,.65, 1735,.65, 1745,.85, 1751,.92, 1770,1.18, 1780,1.25, 1802,1.3, 1834,1.29, 1844,1.36, 1866,1.33, 1911,1.27, 1955,1.18, 2019,1.2, 2089,1.11, 2140,1.08, 2251,.97];
const trend = [34,440, 75,423, 101,420, 126,423, 166,440, 192,449, 225,444, 258,437, 274,436, 307,447, 340,467, 365,482, 384,500, 411,520, 450,527, 458,527, 483,512, 516,480, 549,455, 570,450, 581,447, 617,458, 640,459, 664,457, 697,443, 730,435, 768,428, 812,423, 823,424, 857,437, 906,457, 939,468, 966,478, 999,505, 1043,515, 1054,514, 1090,507, 1120,487, 1158,470, 1246,455, 1263,457, 1307,473, 1340,487, 1372,492, 1383,492, 1427,477, 1471,462, 1515,437, 1560,405, 1598,382, 1656,350, 1700,340, 1713,345, 1732,345, 1745,354, 1760,386, 1770,418, 1783,460, 1809,497, 1834,524, 1860,552, 1879,556, 1885,555, 1911,547, 1943,515, 1968,474, 2006,437, 2045,377, 2089,340, 2134,340, 2150,336, 2172,333, 2211,313, 2251,285];
const down = [[122, 195], [280, 453], [578, 640], [818, 1049], [1258, 1376], [1710, 1883], [2112, 2138]];
const sell = [[126, 170], [272, 442], [578, 620], [825, 1048], [1258, 1350], [1747, 1895]];

// open, close
const candles = [
  1290,1287, 1293,1291, 1295,1284, 1285,1300, 1306,1301, 1303,1280, 1282,1275, 1279,1280, 1282,1279, 1281,1282, 1285,1282, 1282,1254, 1256,1257, 1259,1262, 1261,1258, 1260,1245,
  1247,1254, 1258,1270, 1269,1272, 1279,1280, 1281,1282, 1286,1283, 1286,1294, 1296,1286, 1291,1284, 1284,1280, 1284,1280, 1282,1281, 1286,1268, 1271,1274, 1276,1264, 1261,1254, 1257,1232, 1225,1238, 1232,1233, 1235,1242, 1248,1246, 1247,1245, 1248,1251,
  1254,1227, 1216,1236, 1219,1188, 1197,1211, 1217,1216, 1212,1207, 1215,1223, 1226,1231, 1230,1231, 1234,1230, 1231,1223, 1228,1252, 1259,1261, 1263,1272, 1272,1284, 1288,1283, 1283,1286, 1290,1280, 1280,1281, 1283,1281, 1281,1282, 1283,1284,
  1274,1276, 1276,1268, 1268,1274, 1270,1267, 1270,1256, 1256,1254, 1259,1256, 1256,1252, 1252,1239, 1240,1259, 1262,1265, 1268,1271, 1278,1272, 1275,1268, 1268,1277, 1282,1287, 1290,1291, 1295,1290, 1290,1288,
  1291,1292, 1290,1287, 1289,1278, 1279,1270, 1274,1270, 1272,1272.5, 1274,1282, 1290,1286, 1287,1288, 1297,1286, 1288,1281, 1281,1280, 1282,1286, 1291,1285, 1285,1279, 1280,1270, 1270,1271, 1269,1257, 1261,1252, 1252,1254, 1258,1262, 1265,1258, 1260,1264,
  1262,1255, 1256,1244, 1244,1246, 1252,1260, 1266,1261, 1260,1252, 1254,1250, 1252,1244, 1243,1245, 1244,1232, 1229,1218, 1218,1217, 1221,1205, 1203,1216, 1217,1228, 1231,1228, 1229,1234, 1236,1241, 1239,1240, 1246,1242, 1243,1250,
  1255,1251, 1251,1250, 1247,1241, 1240,1268, 1271,1270, 1271,1274, 1274,1272, 1272,1269, 1271,1267, 1265,1263, 1264,1263.5, 1264,1262, 1262,1266, 1257,1255, 1256,1257, 1262,1263, 1263,1261, 1262,1274, 1275,1273, 1276,1275, 1273,1272, 1272,1267,
  1269,1270, 1268,1256, 1255,1246, 1249,1247, 1247,1251, 1250,1246, 1246,1230, 1227,1236, 1235,1229, 1234,1236, 1241,1242, 1243,1245, 1250,1249, 1253,1247, 1249,1243, 1248,1260, 1260,1265,
  1259,1253, 1258,1265, 1269,1270, 1274,1272, 1272,1275, 1272,1263, 1266,1268, 1271,1267, 1266,1270, 1277,1275, 1277,1273, 1274,1278, 1280,1289, 1292,1293, 1293,1296, 1298,1305, 1307,1303, 1306,1303, 1307,1308, 1307,1306,
  1307,1310, 1307,1312, 1313,1304, 1308,1318, 1320,1326, 1327,1330, 1319,1333, 1337,1334, 1336,1326, 1326,1328, 1331,1336, 1340,1331, 1331,1324, 1327,1323, 1325,1321, 1322,1331, 1336,1331, 1333,1326, 1327,1325, 1325,1317, 1313,1306,
  1313,1317, 1323,1317, 1274,1230, 1160,1210, 1173,1132, 1073,1094, 1166,1168, 1186,1222, 1235,1241, 1233,1227, 1225,1210, 1201,1218, 1228,1219, 1220,1207, 1202,1197, 1216,1211, 1215,1223, 1227,1229, 1234,1227, 1227,1226.5,
  1235,1240, 1245,1242, 1241,1250, 1255,1270, 1275,1267, 1272,1283, 1293,1294, 1295,1309, 1315,1312, 1314,1301, 1293,1297, 1299,1315, 1330,1323, 1320,1314, 1314,1315, 1317,1332, 1338,1340, 1344,1341, 1347,1342, 1342,1332,
  1331,1336, 1341,1347, 1350,1347, 1347,1344, 1339,1331, 1331,1311, 1308,1316, 1322,1315, 1321,1323, 1314,1315, 1313,1338, 1344,1347, 1350,1347, 1347,1350, 1355,1349, 1345,1358, 1366,1367, 1369,1367, 1369,1365, 1369,1372, 1375,1376,
  1379,1378, 1377,1384, 1382,1381.5
];
const volume = [
  65,83,92,82,90,109,82,66,81,87,75,118,55,63,50,73,
  50,51,53,51,62,71,82,72,68,58,50,67,126,69,75,90,78,70,45,44,50,65,74,
  91,70,101,65,55,68,58,54,54,47,45,99,66,83,77,64,68,74,63,72,66,54,
  62,63,56,46,64,56,40,40,48,49,65,52,90,47,52,97,94,97,
  75,99,60,108,61,53,70,69,71,51,72,72,50,66,61,61,78,57,62,57,43,52,52,49,
  58,64,35,55,50,55,77,56,62,60,72,59,45,70,45,48,43,54,40,45,45,
  41,47,54,90,65,62,53,53,54,42,38,36,42,70,45,40,55,77,52,62,48,42,
  40,54,55,54,39,30,50,46,35,42,42,35,37,39,42,53,53,
  52,62,58,57,60,77,45,49,51,65,80,66,80,76,72,87,89,75,91,81,
  85,100,82,105,98,90,95,75,107,98,95,85,88,85,65,84,80,70,62,68,80,
  55,75,185,158,112,165,29,221,107,110,82,73,112,89,243,84,77,84,61,59,
  60,77,75,84,73,91,94,96,112,89,95,103,115,125,75,117,113,100,96,98,
  91,112,103,80,94,75,76,55,87,125,83,82,82,70,82,77,95,79,63,73,68,
  76,91,142
];
// x, upper, lower
const ribbon = [
  ["p", 34,737,738, 71,733,739, 115,735,741, 126,735,740, 165,744,744],
  ["g", 165,744,744, 197,746,751, 258,744,757, 302,743,757, 351,747,757, 373,748,753, 428,753,759, 461,754,761, 494,755,757],
  ["p", 494,755,756, 515,755,757, 540,757,757],
  ["g", 540,757,758, 614,758,765, 658,759,767, 697,758,761, 715,757,757],
  ["p", 715,757,757, 768,751,758, 823,749,759, 845,754,758, 863,758,758],
  ["g", 863,758,758, 890,761,764, 999,761,770, 1065,762,773, 1093,764,770, 1164,769,777, 1213,771,772],
  ["p", 1213,770,772, 1255,773,773],
  ["g", 1255,772,773, 1329,773,777, 1383,776,782, 1427,774,777, 1471,772,773],
  ["p", 1471,773,773, 1526,757,772, 1560,749,767, 1598,739,760, 1624,733,758, 1688,733,753, 1735,734,749, 1764,723,740, 1834,717,733, 1872,713,729, 1901,716,728, 1917,727,729],
  ["g", 1917,728,728, 1955,727,734, 2006,726,736, 2057,726,727],
  ["p", 2057,726,726, 2089,722,726, 2121,726,726],
  ["g", 2121,726,726, 2147,723,726, 2185,730,732, 2242,734,743, 2251,732,740]
];
const stops = [
  [126,392, 134,439, 142,439, 159,439, 176,439, 184,439, 192,439],
  [291,424, 300,438, 308,467, 333,467, 358,467, 367,478, 376,501, 383,514, 391,514, 416,514, 439,514],
  [607,453, 615,453, 624,453, 632,453, 657,453],
  [823,409, 831,422, 840,422, 848,443, 865,444, 898,453, 906,469, 923,469, 931,469, 939,469, 964,469, 972,502, 981,508, 989,515, 1005,515, 1014,515, 1022,515, 1031,515, 1039,515],
  [1263,448, 1271,458, 1280,464, 1296,469, 1304,492, 1329,492, 1337,492, 1346,492, 1362,492],
  [1711,327, 1719,346, 1735,346, 1744,400, 1752,515, 1760,572, 1769,627, 1777,627, 1786,627, 1794,627, 1811,627, 1851,627]
];

function drawPrice() {
  const grid = [];
  for (let p = 1440; p >= 1080; p -= 20) grid.push(py(p));
  let s = backdrop(101, 829, grid);
  const edge = k => Array.from({ length: BARS }, (_, i) => [bx(i), at(mid, bx(i)) + k * at(spread, bx(i))]);
  const band = (a, b, fill) => `<polygon points="${edge(a).concat(edge(b).reverse()).map(p => p.map(n => n.toFixed(1)).join()).join(" ")}" fill="${fill}"/>`;
  s += band(-193, -145, "#00f") + band(-94, -60, "#000") + band(-28, 33, "#808080") + band(59, 93, "#000") + band(93, 145, "#00f");
  [-94, -60, 59, 93].forEach(k => s += poly(edge(k), "#aaa", 'stroke-dasharray="2 2"'));

  ribbon.forEach(r => {
    const up = [], lo = [];
    for (let i = 1; i < r.length; i += 3) {
      up.push(r[i] + "," + r[i + 1]);
      lo.unshift(r[i] + "," + (r[i + 2] + 1));
    }
    s += `<polygon points="${up.concat(lo).join(" ")}" fill="${r[0] === "p" ? "#800080" : "#005a00"}"/>`;
  });
  for (let i = 0; i < BARS; i++) {
    const red = candles[2 * i + 1] < candles[2 * i];
    s += rect(bx(i), 829 - volume[i], 1, volume[i], red ? "#c01818" : "#808080");
  }

  for (let i = 0; i < BARS; i++) {
    const x = bx(i), y = at(trend, x), slope = Math.abs(at(trend, x + 8) - at(trend, x - 8));
    const h = Math.min(4 + slope * 1.1, 62), pink = inside(down, x), c = pink ? "#ffc0cb" : "#0000c8";
    s += rect(x - .5, y - h / 2 - 7 - i % 5, 1, h + 22 + i % 4, c);
    s += rect(x - 3, y - h / 2, 6, h, pink ? c : "#000050", pink ? "" : 'stroke="#000098"');
  }
  for (let i = 0; i < BARS; i++) {
    const x = bx(i), o = py(candles[2 * i]), c = py(candles[2 * i + 1]);
    const top = Math.min(o, c), h = Math.abs(o - c), red = c > o;
    let hi = 2 + i * 7 % 9, lo = 2 + i * 5 % 9;
    if (i === 209) hi = 87;
    if (i === 267) hi = 19;
    const col = red && i < 267 ? "#f00000" : "#32dc32";
    s += rect(x - .5, top - hi, 1, hi, col) + rect(x - .5, top + h, 1, lo, col);
    s += red ? rect(x - 3, top, 7, Math.max(h, 1), col) : rect(x - 3, top, 6, h, "#080808", 'stroke="#32dc32"');
  }
  s += poly(edge(0), "#000");
  for (let i = 0; i < BARS; i++) {
    const y = at(mid, bx(i)), yellow = inside(sell, bx(i));
    s += rect(bx(i) - 2, y - 2, 4, yellow ? 5 : 4, yellow ? "#ffff30" : "#6a106a");
  }
  stops.forEach((st, n) => {
    const pts = [];
    for (let i = 0; i < st.length; i += 2) pts.push([st[i], st[i + 1]]);
    s += poly(pts, "#fff");
    pts.forEach((p, i) => {
      if (n !== 5 && n !== 2 || i < pts.length - 1) s += `<circle cx="${p[0]}" cy="${p[1]}" r="${i ? 3 : 6}" fill="#f0f"/>`;
    });
  });
  s += rect(29, 829, 2498, 17, "#000") + line(29, 829.5, 2466, 829.5, "#aaa");
  months.forEach(m => s += line(bx(m[0]) - 1, 830, bx(m[0]) - 1, 836, "#aaa"));
  document.querySelector("#price .plot").innerHTML = s;

  // volume-at-price, one thin row for each price step
  const prof = [238,2527, 242,2494, 249,2515, 252,2488, 256,2505, 262,2486, 264,2527, 292,2527, 297,2490, 303,2466, 312,2440, 324,2425, 336,2392, 339,2418, 347,2392, 354,2410, 363,2402, 373,2420, 384,2385, 393,2430, 401,2390, 410,2341, 414,2345, 421,2287, 424,2312, 428,2286, 432,2308, 436,2284, 441,2264, 448,2295, 457,2320, 469,2338, 478,2370, 493,2354, 501,2376, 508,2453, 515,2422, 518,2432, 524,2408, 533,2440, 542,2466, 561,2470, 572,2497, 584,2507, 616,2517, 639,2517, 641,2505, 646,2518, 694,2520, 717,2523, 818,2525];
  s = "";
  for (let y = 239; y < 818; y += 2) {
    const x = Math.min(at(prof, y) + (y > 300 && y < 560 ? y * 13 % 17 - 6 : 0), 2527);
    if (x < 2527) s += rect(x, y, (2527 - x).toFixed(1), 2, "#005400");
  }
  document.querySelector("#price .profile").innerHTML = s;
}

/* ---- money ---- */
const fast = [34,928, 50,926, 67,919, 75,922, 83,926, 100,930, 117,932, 126,940, 142,952, 166,967, 176,967, 192,963, 217,951, 233,948, 263,948, 283,954, 291,962, 300,973, 316,991, 333,996, 358,1002, 366,1004, 374,1013, 391,1022, 408,1022, 424,1017, 441,1012, 457,997, 474,978, 490,960, 507,951, 532,943, 549,944, 566,946, 590,958, 607,970, 624,969, 648,964, 665,956, 682,943, 705,937, 723,943, 740,948, 765,945, 806,944, 823,951, 839,962, 847,968, 873,982, 906,998, 923,995, 956,1002, 972,1013, 997,1039, 1014,1036, 1039,1022, 1072,1002, 1089,990, 1105,972, 1122,959, 1138,956, 1163,954, 1197,960, 1230,948, 1246,948, 1263,959, 1280,970, 1296,986, 1321,1002, 1337,1000, 1363,996, 1379,984, 1395,977, 1421,959, 1445,954, 1479,945, 1504,928, 1537,906, 1570,892, 1611,870, 1636,867, 1652,870, 1677,878, 1702,885, 1719,901, 1735,910, 1744,944, 1752,975, 1760,1017, 1769,1052, 1777,1061, 1786,1055, 1794,1047, 1811,1037, 1844,1028, 1877,1017, 1902,1006, 1927,989, 1943,973, 1960,959, 1993,939, 2043,916, 2084,908, 2101,916, 2134,929, 2151,926, 2184,919, 2225,900, 2251,889];
const slow = [34,932, 82,931, 118,930, 143,933, 192,938, 285,940, 351,948, 417,962, 472,967, 483,967, 581,962, 598,963, 653,963, 823,955, 862,958, 967,969, 1043,981, 1104,983, 1263,970, 1274,971, 1378,978, 1389,978, 1493,971, 1559,959, 1640,940, 1656,937, 1735,927, 1744,928, 1783,942, 1847,960, 1933,968, 1955,967, 2038,960, 2115,950, 2185,944, 2251,937];
const hot = [24, 25, 49, 50, 54, 74, 107, 118, 121, 125, 126, 159, 160, 162, 213, 214, 217, 218, 222, 223, 228];

function drawMoney() {
  let s = backdrop(847, 1097, [867, 902, 937, 972, 1007, 1042, 1077]);
  [3, 5, 8, 11, 14, 18, 22, 27, 33, 40, 48, 56].forEach(n => {
    let e = at(slow, 34) - 2 + n / 8, run = [], col = "";
    for (let i = 0; i < BARS; i++) {
      const f = at(fast, bx(i));
      e += (f - e) * 2 / (n + 1);
      const c = f > at(slow, bx(i)) ? "#909090" : "#ffdada";
      if (c !== col) {
        if (run.length) s += poly(run, col, 'stroke-dasharray="3 3"');
        run = run.slice(-1);
        col = c;
      }
      run.push([bx(i), e]);
    }
    s += poly(run, col, 'stroke-dasharray="3 3"');
  });
  for (let i = 0; i < BARS - 1; i++) {
    const a = bx(i), b = bx(i + 1);
    s += line(a, at(slow, a), b, at(slow, b), at(fast, a) > at(slow, a) ? "#c81414" : "#0000c0", 'stroke-width="3"');
  }
  for (let i = 0; i < BARS; i++) {
    const x = bx(i), y = at(fast, x), prev = at(fast, x - STEP), under = y > at(slow, x);
    const d = y - prev, h = Math.min(3 + Math.abs(d) * 1.8, 66), top = y - h / 2;
    if (hot.includes(i)) s += rect(x - 3, top, 7, h + 1, "#f020f0");
    else if (d > .05) s += rect(x - 3, top, 6, h, "#080808", 'stroke="#c01414"');
    else s += rect(x - 3, top, 7, h, under ? "#0f7a0f" : "#14f014");
  }
  document.querySelector("#money .plot").innerHTML = s;
}

/* ---- mcdx ---- */
const green = [0,1.1, 2,1.6, 3,0, 4,0, 5,2.5, 6,3.2, 7,2.8, 10,2.5, 11,5.5, 14,5, 15,6.6, 16,5.5, 17,4.2, 19,3.1, 21,2.8, 22,1.9, 23,2.7, 26,3.4, 27,3.4, 28,4.8, 29,4.2, 30,5, 31,6.5, 32,8.9, 34,8.6, 35,7.6, 37,7.3, 38,6.5, 39,9, 40,8, 41,12.4, 42,9.9, 43,9.3, 44,10, 45,8.4, 46,7.8, 48,7.8, 49,8.3, 50,5.5, 51,4.6, 52,3.7, 53,2.7, 55,2.7, 56,3.2, 60,3, 61,3.8, 62,4.8, 64,4.7, 65,6.2, 68,6.5, 69,7.9, 70,5.8, 72,4.4, 74,4.6, 76,3, 77,2.3, 80,2.4, 82,4.2, 83,5, 85,5, 86,3.8, 87,3.3, 90,3.5, 91,4.2, 92,3.4, 94,4, 95,5.6, 96,5.5, 97,7.3, 98,7.9, 100,6.6, 102,6.2, 104,8.8, 105,8.5, 106,6.5, 107,6.6, 110,8.5, 111,8.5, 112,10.2, 113,11.6, 115,13.1, 116,11.4, 117,9.7, 119,8.8, 120,7.7, 122,7.7, 123,6.5, 125,6.5, 126,7.9, 127,4.4, 130,3.7, 134,5.1, 136,4.6, 137,6.3, 139,5.1, 140,5.5, 141,3.7, 143,3.4, 145,4.8, 146,4.2, 147,6.6, 148,7.9, 151,7.9, 152,9.9, 154,9.9, 157,6.8, 160,7.6, 161,5.3, 162,4.5, 163,6.2, 164,4.6, 167,3.2, 168,5.1, 174,3.1, 175,1.7, 177,.7, 178,0, 201,0, 202,1.4, 203,3.2, 204,1.7, 205,1.7, 206,13, 207,14.7, 208,30, 209,30, 210,14.1, 211,9.6, 212,8.2, 213,9.2, 214,10, 216,9.4, 218,10.8, 220,8.7, 223,8.5, 224,7.3, 226,6.7, 227,5.4, 228,5.4, 229,4.2, 231,2.4, 232,2, 234,3.5, 236,1.6, 237,2.4, 238,2.4, 240,.6, 242,.6, 243,1.5, 245,.5, 247,.6, 248,2.1, 249,3.8, 252,3, 253,3.7, 254,1.5, 258,.9, 259,.5, 260,0];
const redBars = [0,9.7, 1,10.1, 2,9.5, 3,11.2, 4,11.6, 5,7.4, 6,6.5, 7,7.1, 10,7.6, 11,2.4, 13,3.4, 14,3, 15,.6, 16,2.4, 17,4.7, 18,5.8, 20,6.9, 21,6.9, 22,8.6, 23,7, 27,5.9, 28,3.4, 29,4.6, 30,2.5, 31,.7, 32,0, 49,0, 50,1.4, 51,2.9, 52,4.5, 53,6.3, 54,5.8, 55,6.3, 56,5.5, 60,5.9, 61,4.6, 62,2.8, 63,4, 64,2.8, 65,.6, 67,.8, 68,0, 69,0, 70,1.4, 71,2, 72,3.5, 74,2.8, 75,4.5, 76,6.4, 77,7, 79,6.2, 80,6.9, 81,6.2, 82,4, 83,2.4, 85,2.9, 86,4.6, 88,5.8, 90,5.2, 91,4, 93,5.2, 94,3.7, 95,1.5, 96,1.5, 97,0, 126,0, 127,3.1, 129,4.3, 132,3.1, 133,1.7, 136,2.5, 137,.3, 138,.6, 139,1.6, 140,1.2, 141,4, 143,4.2, 145,2.4, 146,3.1, 147,0, 160,0, 161,1.4, 162,2.5, 163,.7, 164,2.4, 167,4.5, 168,1.8, 170,3.4, 172,4.7, 174,4.1, 175,7.3, 177,9.3, 178,10.6, 180,10.5, 184,12, 185,10.2, 186,12.9, 188,15.5, 190,15.9, 191,13.7, 192,13.7, 193,15.8, 194,13.8, 195,12.1, 197,11.3, 198,13.3, 201,11, 202,9, 203,5.9, 204,8.5, 205,8.5, 206,0, 226,0, 227,1.3, 228,1.1, 229,2.9, 231,6.3, 232,6.9, 233,4.8, 236,7.8, 237,6.7, 239,8.6, 241,9.9, 243,8.5, 245,10, 247,9.5, 248,7.3, 249,4.2, 252,5.9, 253,4.6, 254,7.8, 255,9, 258,9.6, 260,11.3, 262,11.6, 266,13.8, 267,13.3];
const black = [34,21.8, 67,20, 118,22.1, 132,24, 151,25.1, 166,26.8, 176,27.2, 203,25.5, 219,23.7, 236,23.2, 261,23.3, 285,25.1, 313,28, 329,29.4, 343,29.8, 447,29.8, 466,28.8, 483,26.8, 499,25.1, 527,24.2, 549,24.6, 570,26.3, 598,28.5, 620,29.3, 653,28, 680,25.4, 710,23.9, 735,25.4, 762,26.2, 806,25, 835,27, 857,28.8, 884,29.8, 1082,29.8, 1120,27.4, 1139,26.8, 1180,28.6, 1197,28.6, 1246,26.8, 1263,27.7, 1285,29.3, 1304,29.8, 1367,29.8, 1389,29.3, 1422,27.4, 1444,27.1, 1466,26.4, 1479,26.4, 1510,23.4, 1537,20.3, 1559,18.9, 1570,19, 1603,16.4, 1636,14.9, 1643,15.1, 1672,16.7, 1688,16.8, 1735,20, 1770,26.8, 1793,29.8, 1914,29.8, 1936,29.1, 1968,26, 1997,23.7, 2013,23.6, 2038,21.6, 2083,20.3, 2134,24.3, 2147,24.4, 2198,20.2, 2251,17.3];
const long = [34,5.6, 82,7.1, 118,7.6, 192,7.2, 230,6.8, 285,6.1, 357,4, 428,2.5, 549,2.1, 614,2, 658,2.8, 713,3.8, 768,4.1, 812,3.8, 835,3.4, 917,3.1, 999,1.6, 1082,.5, 1131,.6, 1197,1, 1246,1.6, 1383,1.4, 1466,1.7, 1515,2.5, 1548,3.7, 1560,4.2, 1624,7.1, 1688,9.6, 1745,10.7, 1783,10, 1847,7.6, 1898,5.1, 1943,3.3, 1994,2.4, 2032,2.4, 2096,4.2, 2159,5.5, 2251,8.6];

function drawMcdx() {
  let s = backdrop(1098, 1347, [0, 5, 10, 15, 20, 25, 30].map(vy));
  for (let i = 0; i < BARS; i++) {
    const x = bx(i) - 3.5, g = at(green, i) * 6.45, r = at(redBars, i) * 6.45;
    s += rect(x - 1, 1130, 9, 194, i % 2 ? "#a8a818" : "#181800") + rect(x, 1130, 7, 194, "#ffff20");
    if (g) s += rect(x + 1, 1130, 5, g, "#14f014");
    if (r > 0) s += rect(x - 1, 1324 - r, 9, r, "#c80000") + rect(x, 1324 - r, 7, r, "#f00");
  }
  s += line(31, 1324, 2255, 1324, "#a00000");
  const lp = [], bp = [];
  for (let i = 0; i < BARS; i++) {
    lp.push([bx(i), vy(at(long, bx(i)))]);
    bp.push([bx(i), vy(at(black, bx(i)))]);
  }
  s += poly(bp, "#101030") + poly(lp, "#ffc890");
  for (let i = 0; i < BARS - 1; i++) {
    const a = 30 - at(black, bx(i)), b = 30 - at(black, bx(i + 1));
    s += line(bx(i), vy(a), bx(i + 1), vy(b), b < a ? "#701010" : "#4010c0", 'stroke-width="2"');
  }
  document.querySelector("#mcdx .plot").innerHTML = s;
}

/* ---- labels ---- */
function labels(id, y0, h, scale, tags) {
  const pct = y => ((y - y0) / h * 100).toFixed(2) + "%";
  document.querySelector(`#${id} .scale`).innerHTML = scale.map(t => `<span style="top:${pct(t[1])}">${t[0]}</span>`).join("");
  document.querySelector(`#${id} .tags`).innerHTML = tags.map(t => `<div class="tag ${t[4] || ""}" style="top:${pct(t[1])};background:${t[2]};color:${t[3]}">${t[0]}</div>`).join("");
}

drawPrice();
drawMoney();
drawMcdx();

const prices = [1440, 1420, 1400, 1200, 1180, 1160, 1140, 1120, 1100, 1080].map(p => [p.toLocaleString("en-US"), py(p)]);
labels("price", 101, 745, prices, [
  ["1,315.757", 203, "#f00", "#700", "tight"], ["1,382.24", 218, "#808080", "#111"], ["1,381.96", 233, "#0f0", "#063006"],
  ["1,363.66", 267, "#808080", "#111", "arrow"], ["1,360.93", 282, "#00f", "#fff"],
  ["1,333.11", 324, "#800080", "#fff"], ["1,333.11", 339, "#000", "#fff"],
  ["1,302.56", 381, "#808080", "#111"], ["1,284.93", 414, "#808080", "#111"]
]);
const pinks = ["21.897", "20.4665", "19.3346", "18.3111", "17.341", "16.4318", "15.599", "14.5055", "13.3154", "12.3688", "11.5997", "10.9592", "10.4142"];
labels("money", 847, 250, [["30", 867]], [["22.7839", 885, "#0f0", "#063006", "arrow"]].concat(pinks.map((t, i) => [t, 900 + i * 15, "#ffc0cb", "#222"])));
labels("mcdx", 1098, 249, [0, 5, 10, 20, 25, 30].map(v => [v, vy(v)]), [
  ["30", 1123, "#ffff20", "#333", "small"], ["17.4591", 1204, "#000", "#fff"], ["13.3676", 1220, "#f00", "#700"],
  ["12.5409", 1235, "#00f", "#fff", "arrow"], ["8.74414", 1260, "#ffc0cb", "#222"]
]);
document.querySelector(".months").innerHTML = months.map(m => `<span class="${m[1] === "2025" ? "year" : ""}" style="left:${((bx(m[0]) - 30) / 2498 * 100).toFixed(2)}%">${m[1]}</span>`).join("");
```
